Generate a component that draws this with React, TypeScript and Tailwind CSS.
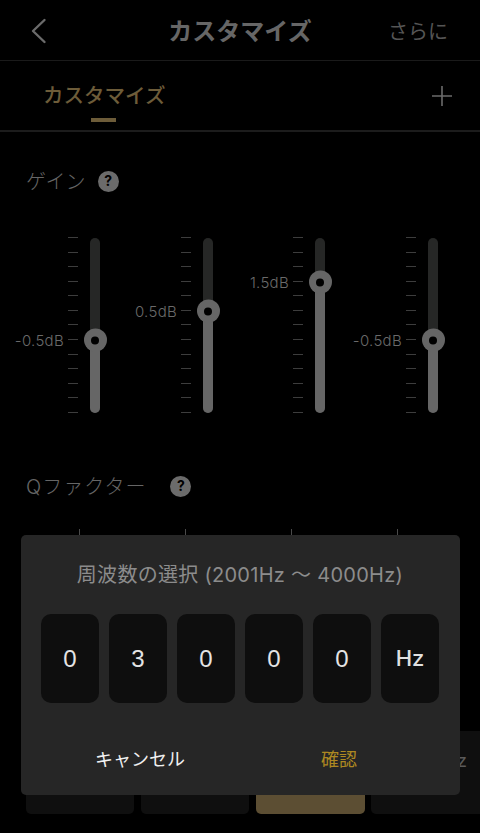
import React from "react";

const font = { fontFamily: '"Inter","Noto Sans CJK JP",sans-serif' };
const digitFont = { fontFamily: '"Liberation Sans",sans-serif' };

function Help() {
  return (
    <span className="mt-[-2px] flex h-[21px] w-[21px] items-center justify-center rounded-full bg-[#6b6b6b] text-[14px] font-bold leading-none text-black">
      ?
    </span>
  );
}

function Slider({ label, top }: { label: string; top: number }) {
  const ticks = Array.from({ length: 13 });
  return (
    <div className="relative flex h-[176px] w-[48px] justify-between">
      <div className="flex h-full w-[10px] flex-col justify-between">
        {ticks.map((_, i) => (
          <div key={i} className="h-px w-[10px] bg-[#3d3d3d]" />
        ))}
      </div>
      <div className="relative mr-[16px] mt-px h-[175px] w-[10px] rounded-full bg-[#262726]">
        <div
          className="absolute bottom-0 left-0 w-[10px] rounded-b-full bg-[#666666]"
          style={{ top }}
        />
        <div
          className="absolute left-[-6.5px] flex h-[23px] w-[23px] -translate-y-1/2 items-center justify-center rounded-full bg-[#666666]"
          style={{ top }}
        >
          <div className="h-[8px] w-[8px] rounded-full bg-black" />
        </div>
      </div>
      <span
        className="absolute right-[52px] -translate-y-1/2 whitespace-nowrap pt-px text-[15px] font-light leading-none tracking-[0.3px] text-[#6a6a6a]"
        style={{ top: top + 1 }}
      >
        {label}
      </span>
    </div>
  );
}

const cells = ["0", "3", "0", "0", "0"];

export default function App() {
  return (
    <div className="relative h-[833px] w-[480px] overflow-hidden bg-black" style={font}>
      <header className="grid h-[61px] grid-cols-[1fr_auto_1fr] items-center border-b border-[#1a1a1a] pl-[29px] pr-[32px]">
        <svg width="20" height="26" viewBox="0 0 20 26" fill="none" stroke="#6b6b6b" strokeWidth="2.4" strokeLinecap="round" strokeLinejoin="round" className="mt-[2px]">
          <path d="M15.5 2 L4 13 L15.5 24" />
        </svg>
        <h1 className="ml-[3px] mt-[3px] text-[24px] font-bold leading-none text-[#666666]">カスタマイズ</h1>
        <span className="mt-[3px] justify-self-end text-[20px] leading-none text-[#555555]">さらに</span>
      </header>

      <div className="relative flex h-[71px] items-center justify-between border-b-2 border-[#1c1c1c] pb-[2px] pl-[43px] pr-[28px]">
        <span className="mt-[3px] text-[20.5px] font-medium leading-none text-[#6d5c39]">カスタマイズ</span>
        <svg width="20" height="20" viewBox="0 0 20 20" stroke="#6b6b6b" strokeWidth="1.6" className="mt-[2px]">
          <path d="M10 0 V20 M0 10 H20" />
        </svg>
        <div className="absolute bottom-[8px] left-[91px] h-[4px] w-[25px] bg-[#6d5c39]" />
      </div>

      <div className="mt-[38px] flex items-center gap-[12px] pl-[26px]">
        <span className="text-[20px] font-light leading-[24px] text-[#666666]">ゲイン</span>
        <Help />
      </div>

      <div className="mt-[43px] grid grid-cols-[113px_112px_113px_48px] pl-[68px]">
        <Slider label="-0.5dB" top={102} />
        <Slider label="0.5dB" top={73} />
        <Slider label="1.5dB" top={44} />
        <Slider label="-0.5dB" top={102} />
      </div>

      <div className="mt-[62px] flex items-center gap-[24px] pl-[26px]">
        <span className="text-[20px] font-light leading-[24px] tracking-[1px] text-[#666666]">Qファクター</span>
        <Help />
      </div>

      <div className="mt-[30px] grid grid-cols-[106px_106px_106px_1px] pl-[79px]">
        {[0, 1, 2, 3].map((i) => (
          <div key={i} className="h-[8px] w-px bg-[#4a4a4a]" />
        ))}
      </div>

      <div className="mt-[194px] flex gap-[7px] pl-[26px]">
        <div className="h-[83px] w-[108px] shrink-0 rounded-[5px] bg-[#0f0f0f]" />
        <div className="h-[83px] w-[108px] shrink-0 rounded-[5px] bg-[#0f0f0f]" />
        <div className="h-[83px] w-[109px] shrink-0 rounded-[5px] bg-[#5c4e33]" />
        <div className="ml-[-1px] flex h-[83px] w-[120px] shrink-0 items-start rounded-[5px] bg-[#0f0f0f] pl-[86px] pt-[20px] text-[18px] leading-[20px] text-[#5a5a5a]">
          z
        </div>
      </div>

      <div className="absolute left-[21px] top-[535px] h-[260px] w-[439px] rounded-[5px] bg-[#262626]">
        <p className="mt-[27px] pr-[1px] pt-[1px] text-center text-[20px] leading-[24px] tracking-[0.28px] text-[#8c8c8c]">
          周波数の選択 (2001Hz ～ 4000Hz)
        </p>
        <div className="mt-[27px] flex justify-between pl-[20px] pr-[21px]">
          {cells.map((c, i) => (
            <div
              key={i}
              className="flex h-[89px] w-[58px] items-center justify-center rounded-[10px] bg-[#0e0e0e] text-[24px] text-[#e4e4e4]"
              style={digitFont}
            >
              {c}
            </div>
          ))}
          <div className="flex h-[89px] w-[58px] items-center justify-center rounded-[10px] bg-[#0e0e0e] text-[22px] font-medium text-[#e0e0e0]">
            Hz
          </div>
        </div>
        <div className="mt-[42px] flex">
          <span className="w-[238px] text-center text-[18px] leading-[30px] text-[#f0f0f0]">キャンセル</span>
          <span className="w-[160px] text-center text-[18px] leading-[30px] text-[#ad8821]">確認</span>
        </div>
      </div>
    </div>
  );
}
